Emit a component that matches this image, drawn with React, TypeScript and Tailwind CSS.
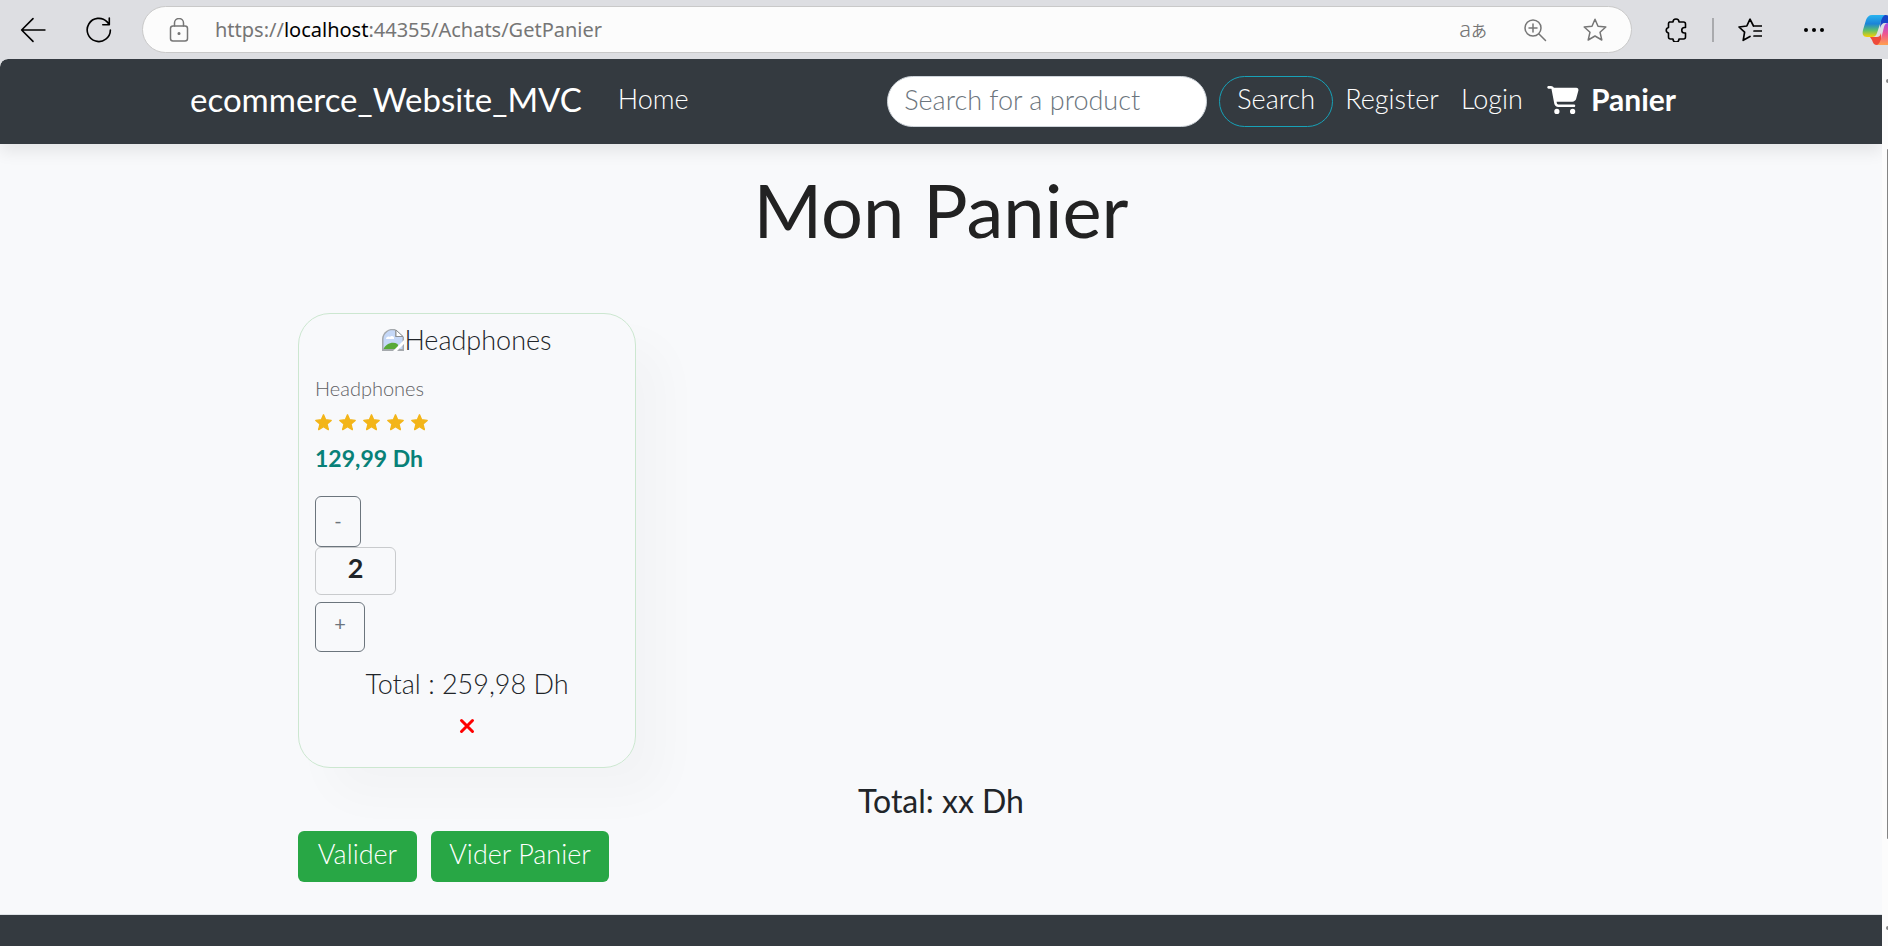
import { useState } from "react";
import type { ReactNode } from "react";

function Icon({ size = "size-6", children }: { size?: string; children: ReactNode }) {
  return (
    <svg
      viewBox="0 0 24 24"
      className={`${size} shrink-0`}
      fill="none"
      stroke="currentColor"
      strokeWidth="1.5"
      strokeLinecap="round"
      strokeLinejoin="round"
      aria-hidden="true"
    >
      {children}
    </svg>
  );
}

const STAR = "M12 1.2 15 8.2 22.8 9 17 14.2 18.8 22 12 18 5.2 22 7 14.2 1.2 9 9 8.2Z";

function CopilotLogo() {
  return (
    <svg viewBox="0 0 36 32" className="h-8 w-9 shrink-0" aria-hidden="true">
      <defs>
        <linearGradient id="left" x1="0" y1="0" x2="0" y2="1">
          <stop offset="0" stopColor="#28b4f0" />
          <stop offset=".4" stopColor="#1b83d8" />
          <stop offset=".7" stopColor="#5fc06a" />
          <stop offset="1" stopColor="#fbd000" />
        </linearGradient>
        <linearGradient id="right" x1="0" y1="0" x2="0" y2="1">
          <stop offset="0" stopColor="#a44be8" />
          <stop offset=".5" stopColor="#f0568f" />
          <stop offset="1" stopColor="#ffa04d" />
        </linearGradient>
      </defs>
      <path d="M19 1h5c2 0 3 1 4 4l1 4h-6c-3 0-4 2-5 5Z" fill="#1746c8" />
      <path d="M8 23h7c2 0 3-1 4-4l1 12h-5c-3 0-4-2-5-5Z" fill="#ee4a3a" />
      <path d="M10 1h13c-2 1-3 3-4 6l-4 12c-1 3-3 4-5 4H5c-4 0-5-3-4-7L4 6c1-3 3-5 6-5Z" fill="url(#left)" />
      <path d="M26 9h5c4 0 5 3 4 7l-3 10c-1 3-3 5-6 5H15c2-1 3-3 4-6l3-12c1-3 2-4 4-4Z" fill="url(#right)" />
    </svg>
  );
}

function BrowserBar() {
  return (
    <div className="flex h-[59px] shrink-0 items-center overflow-hidden bg-[#dddee2] pl-5 text-black">
      <button aria-label="Back" className="mr-10">
        <Icon size="size-[26px]">
          <path d="M23 12H1.5M12 1.5 1.5 12 12 22.5" />
        </Icon>
      </button>
      <button aria-label="Refresh" className="mr-[30px]">
        <Icon size="size-[26px]">
          <path d="M22.5 12A10.7 10.7 0 1 1 19.5 4.5L21.5 7M21.5 1v6.200h-6" />
        </Icon>
      </button>
      <div className="flex h-[47px] min-w-0 flex-1 items-center rounded-full border border-[#c9c9c9] bg-[#fcfcfc] pr-6 pl-6 text-[#767676]">
        <Icon>
          <rect x="3.500" y="8" width="17" height="15" rx="2.500" />
          <path d="M7.500 8V5a4.500 4.500 0 0 1 9 0v3" />
          <circle cx="12" cy="15.500" r=".8" fill="currentColor" />
        </Icon>
        <span className="ml-6 flex-1 truncate font-['Noto_Sans',sans-serif] text-xl font-normal">
          https://<span className="text-black">localhost</span>:44355/Achats/GetPanier
        </span>
        <span className="mr-9 flex items-baseline font-['Noto_Sans','Noto_Sans_CJK_JP',sans-serif] font-light">
          <span className="text-[22px] leading-6">a</span>
          <span className="text-[16px] leading-6 font-normal">あ</span>
        </span>
        <button aria-label="Zoom" className="mr-9">
          <Icon>
            <circle cx="10" cy="10" r="8" />
            <path d="m16 16 6.500 6.500M10 6v8M6 10h8" />
          </Icon>
        </button>
        <button aria-label="Add to favorites">
          <Icon>
            <path d={STAR} />
          </Icon>
        </button>
      </div>
      <button aria-label="Extensions" className="ml-8">
        <Icon>
          <path
            strokeWidth="1.600"
            d="M5.500 4H9a3 3 0 0 1 6 0h4.500a2 2 0 0 1 2 2v3.500h-1a2.700 2.700 0 0 0 0 5.500h1v4a2 2 0 0 1-2 2H15a3 3 0 0 1-6 0H6.500a2 2 0 0 1-2-2v-4a2.800 2.800 0 0 1 0-5.500V6a2 2 0 0 1 1-2Z"
          />
        </Icon>
      </button>
      <span className="mx-6 h-6 w-0.5 bg-[#a9aaad]" />
      <button aria-label="Favorites">
        <Icon>
          <path
            strokeWidth="1.700"
            d="M15.500 8 12 1.200 8.800 8 1 9l5.600 5.200L5.200 22.300 12 18.500M16 8h8M16 13h8M16 18h8"
          />
        </Icon>
      </button>
      <button aria-label="Settings and more" className="mr-9 ml-10">
        <svg viewBox="0 0 24 24" className="size-6" fill="currentColor" aria-hidden="true">
          <circle cx="4" cy="12" r="2" />
          <circle cx="12" cy="12" r="2" />
          <circle cx="20" cy="12" r="2" />
        </svg>
      </button>
      <div className="w-[26px] overflow-hidden">
        <CopilotLogo />
      </div>
    </div>
  );
}

function Navbar() {
  return (
    <nav className="relative flex h-[85px] items-center rounded-tl-lg bg-[#343a40] pr-[206px] pb-1 pl-[190px] text-[27px] font-light text-white shadow-[0_8px_16px_rgba(0,0,0,0.08)]">
      <a href="#" className="text-[33px] font-normal">
        ecommerce_Website_MVC
      </a>
      <a href="#" className="ml-9">
        Home
      </a>
      <form className="mt-1 ml-auto flex gap-3" onSubmit={(e) => e.preventDefault()}>
        <input
          type="search"
          aria-label="Search for a product"
          placeholder="Search for a product"
          className="h-[51px] w-80 rounded-[32px] border border-[#ced4da] bg-white px-4 pb-1 text-gray-800 placeholder:text-[#6c757d]"
        />
        <button className="h-[51px] w-[114px] rounded-[32px] border border-[#17a2b8] pb-1">Search</button>
      </form>
      <a href="#" className="ml-3">
        Register
      </a>
      <a href="#" className="ml-[22px]">
        Login
      </a>
      <a href="#" className="ml-6 flex items-center gap-3 text-[30px] font-bold">
        <svg viewBox="0 0 576 512" className="h-7 w-8" fill="currentColor" aria-hidden="true">
          <path d="M0 24C0 10.700 10.700 0 24 0h45.500c22 0 41.500 12.800 50.600 32h411c26.300 0 45.500 25 38.600 50.400l-41 152.300c-8.500 31.400-37 53.300-69.500 53.300H170.700l5.400 28.500c2.200 11.300 12.100 19.500 23.600 19.500H488c13.300 0 24 10.700 24 24s-10.700 24-24 24H199.700c-34.600 0-64.300-24.600-70.700-58.500L77.400 54.500c-.7-3.800-4-6.500-7.900-6.500H24C10.700 48 0 37.300 0 24zm128 440a48 48 0 1 1 96 0 48 48 0 1 1-96 0zm336-48a48 48 0 1 1 0 96 48 48 0 1 1 0-96z" />
        </svg>
        Panier
      </a>
    </nav>
  );
}

function BrokenImage() {
  return (
    <svg viewBox="0 0 22 22" className="size-[22px]" aria-hidden="true">
      <path d="M0 22V10A11 11 0 0 1 13 0L22 8V22Z" fill="#a5a9ad" />
      <path d="M1.500 20V10A9 9 0 0 1 13 1.500V8h7.500v12Z" fill="#c5d8f7" />
      <path d="M4 10c0-2 2-3 4-2 1-2 5-1 4 2Z" fill="#fff" />
      <path d="M1.500 20c2-5 9-8 14-5l2 5Z" fill="#57a937" />
      <path d="M14 1v6.500h7Z" fill="#fff" stroke="#8b8f93" />
      <path d="M11 22 22 11v4l-7 7Z" fill="#fff" />
    </svg>
  );
}

function ProductCard() {
  const [quantity, setQuantity] = useState(2);
  return (
    <article className="flex h-[455px] w-[338px] flex-col rounded-[32px] border border-[#cce7d0] px-4 pt-[10px] shadow-[30px_30px_45px_rgba(0,0,0,0.025)]">
      <div className="flex h-8 items-center justify-center">
        <BrokenImage />
        <span>Headphones</span>
      </div>
      <span className="mt-4 text-xl leading-8 text-[#606063]">Headphones</span>
      <div className="mt-2 flex h-5 items-center gap-[7px] text-[#f3b519]" aria-label="5 stars">
        {[1, 2, 3, 4, 5].map((n) => (
          <svg key={n} viewBox="0 0 24 24" className="size-[17px]" aria-hidden="true">
            <path d={STAR} fill="currentColor" stroke="currentColor" strokeWidth="2" strokeLinejoin="round" />
          </svg>
        ))}
      </div>
      <h4 className="mt-[6px] text-[23px] leading-10 font-bold text-[#088178]">129,99 Dh</h4>
      <button
        aria-label="Decrease quantity"
        className="mt-[18px] h-[51px] w-[46px] shrink-0 rounded-md border border-[#6c757d] pb-1 text-xl font-normal text-[#6c757d]"
        onClick={() => setQuantity(Math.max(1, quantity - 1))}
      >
        -
      </button>
      <input
        aria-label="Quantity"
        className="h-12 w-[81px] shrink-0 rounded-md border border-[#c9cbcd] bg-transparent pb-2 text-center text-[27px] font-bold"
        value={quantity}
        onChange={(e) => setQuantity(Number(e.target.value) || 1)}
      />
      <button
        aria-label="Increase quantity"
        className="mt-[7px] h-[50px] w-[50px] shrink-0 rounded-md border border-[#6c757d] pb-2 text-xl font-normal text-[#6c757d]"
        onClick={() => setQuantity(quantity + 1)}
      >
        +
      </button>
      <p className="mt-3 text-center leading-10">Total : 259,98 Dh</p>
      <button aria-label="Remove" className="mt-[14px] self-center text-[#ff0000]">
        <svg viewBox="0 0 16 16" className="size-4" stroke="currentColor" strokeWidth="3" strokeLinecap="round" aria-hidden="true">
          <path d="m2.500 2.500 11 11m0-11-11 11" />
        </svg>
      </button>
    </article>
  );
}

export default function App() {
  return (
    <div className="flex h-screen flex-col overflow-hidden bg-[#f8f9fb] font-['Lato',sans-serif] text-[27px] font-light text-[#212529]">
      <BrowserBar />
      <div className="flex min-h-0 flex-1 bg-[#dddee2]">
        <div className="flex min-w-0 flex-1 flex-col overflow-hidden rounded-tl-lg bg-[#f8f9fb]">
          <Navbar />
          <main className="px-[298px] pt-[22px] pb-8">
            <h1 className="text-center text-[74px] leading-[88px] font-normal text-[#222222]">Mon Panier</h1>
            <div className="mt-[59px]">
              <ProductCard />
            </div>
            <p className="mt-[10px] text-center text-[32px] leading-[46px] font-normal">Total: xx Dh</p>
            <div className="mt-[7px] flex gap-[14px] text-white">
              <button className="h-[51px] w-[119px] rounded-md bg-[#28a745] pb-1">Valider</button>
              <button className="h-[51px] w-[178px] rounded-md bg-[#28a745] pb-1">Vider Panier</button>
            </div>
          </main>
          <footer className="flex-1 border-t border-[#dee2e6] bg-[#343a40]" />
        </div>
        <div className="flex w-1.5 flex-col items-end overflow-hidden bg-[#fcfcfc]">
          <span className="mt-5 h-1 w-0.5 rounded-l-full bg-[#858585]" />
          <span className="mt-[66px] h-[690px] w-px rounded-l-full bg-[#858585]" />
          <span className="mt-auto mb-4 h-1 w-0.5 rounded-l-full bg-[#858585]" />
        </div>
      </div>
    </div>
  );
}
